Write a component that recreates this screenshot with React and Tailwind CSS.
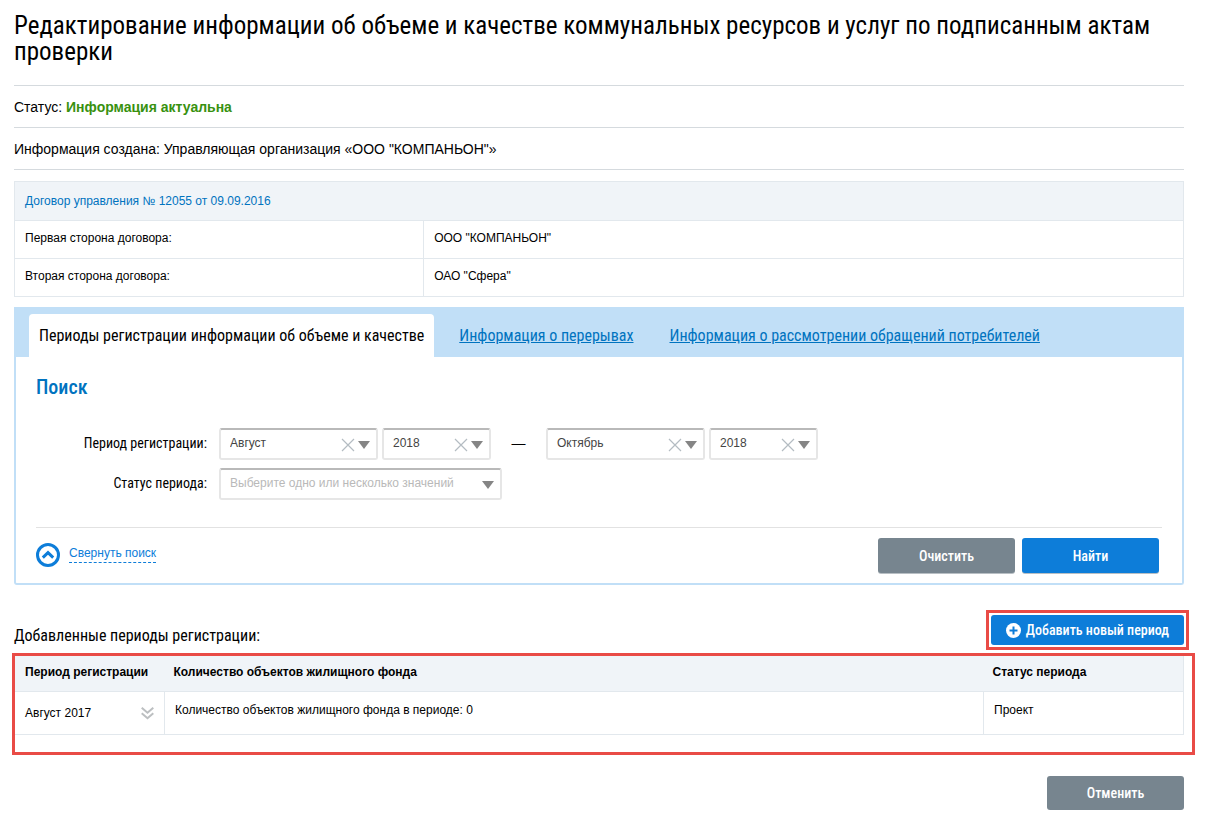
import React, { useState } from 'react';

const MONTHS = ['Январь', 'Февраль', 'Март', 'Апрель', 'Май', 'Июнь', 'Июль', 'Август', 'Сентябрь', 'Октябрь', 'Ноябрь', 'Декабрь'];
const YEARS = ['2016', '2017', '2018', '2019'];

const EMPTY = { monthFrom: '', yearFrom: '', monthTo: '', yearTo: '', status: '' };

const CONTRACT = [
  { label: 'Первая сторона договора:', value: 'ООО "КОМПАНЬОН"' },
  { label: 'Вторая сторона договора:', value: 'ОАО "Сфера"' },
];

const PERIODS = [{ id: 1, name: 'Август 2017', count: 0, status: 'Проект' }];

const Select = ({ id, label, value, options, placeholder = '', clearable, className, onChange }) => (
  <div className={`relative ${className}`}>
    <select
      id={id}
      aria-label={label}
      value={value}
      onChange={(e) => onChange(e.target.value)}
      className={`block h-8 w-full appearance-none rounded-[3px] border-2 border-[#e6e6e6] border-t-[#b9b9b9] bg-white pr-9 pb-[2px] pl-[9px] text-xs ${value ? 'text-[#444]' : 'text-[#b9b9b9]'}`}
    >
      <option value="">{placeholder}</option>
      {options.map((o) => (
        <option key={o} value={o}>{o}</option>
      ))}
    </select>
    {clearable && value && (
      <button type="button" aria-label="Очистить поле" onClick={() => onChange('')} className="absolute top-[10px] right-[23px]">
        <svg width="14" height="14" viewBox="0 0 14 14" className="block" stroke="#b4bcc2" strokeWidth="1.2" fill="none">
          <path d="M1 1l12 12M13 1L1 13" />
        </svg>
      </button>
    )}
    <svg width="12" height="8" viewBox="0 0 12 8" className="pointer-events-none absolute top-[13px] right-2" fill="#858585">
      <path d="M0 0h12L6 8z" />
    </svg>
  </div>
);

const App = () => {
  const [filter, setFilter] = useState({ ...EMPTY, monthFrom: 'Август', yearFrom: '2018', monthTo: 'Октябрь', yearTo: '2018' });
  const [open, setOpen] = useState(true);

  const set = (key) => (value) => setFilter({ ...filter, [key]: value });

  return (
    <main className="bg-white pt-[13px] pr-[22px] pb-2 pl-[14px] font-['Liberation_Sans',Arial,sans-serif] text-xs text-black">
      <h1 className="mb-[20px] font-['Roboto_Condensed','Liberation_Sans_Narrow',sans-serif] text-[25px] leading-[26px]">
        Редактирование информации об объеме и качестве коммунальных ресурсов и услуг по подписанным актам проверки
      </h1>

      {/* Статус */}
      <div className="mb-[11px] border-b border-[#d5dade] text-sm">
        <p className="border-t border-[#d5dade] pt-[11px] pb-[10px] leading-5">
          Статус: <b className="text-[#38910f]">Информация актуальна</b>
        </p>
        <p className="border-t border-[#d5dade] pt-[11px] pb-[10px] leading-5">
          Информация создана: Управляющая организация «ООО "КОМПАНЬОН"»
        </p>
      </div>

      {/* Договор */}
      <table className="mb-[10px] w-full table-fixed border-collapse border border-[#e2e8ed]">
        <colgroup>
          <col className="w-[35%]" />
          <col />
        </colgroup>
        <thead>
          <tr className="h-[39px] bg-[#f0f4f8]">
            <th colSpan="2" className="px-[10px] text-left font-normal">
              <a href="#contract" className="text-[#0073bf]">Договор управления № 12055 от 09.09.2016</a>
            </th>
          </tr>
        </thead>
        <tbody>
          {CONTRACT.map((row) => (
            <tr key={row.label} className="h-[38px] border-t border-[#e2e8ed]">
              <td className="border-r border-[#e2e8ed] px-[10px] pb-[3px]">{row.label}</td>
              <td className="px-[10px] pb-[3px]">{row.value}</td>
            </tr>
          ))}
        </tbody>
      </table>

      {/* Вкладки и поиск */}
      <section className="rounded-b-[3px] border-2 border-t-0 border-[#c1dff7]">
        <nav className="flex h-[50px] items-end bg-[#c1dff7] pl-[13px] font-['Roboto_Condensed','Liberation_Sans_Narrow',sans-serif] text-base">
          <button type="button" className="h-[43px] rounded-t bg-white px-[10px]">Периоды регистрации информации об объеме и качестве</button>
          <a href="#breaks" className="flex h-[43px] items-center pr-[18px] pl-[25px] text-[#0073bf] underline">Информация о перерывах</a>
          <a href="#appeals" className="flex h-[43px] items-center px-[18px] text-[#0073bf] underline">Информация о рассмотрении обращений потребителей</a>
        </nav>

        <div className="px-5 pt-[18px] pb-[10px]">
          <h2 className="font-['Roboto_Condensed','Liberation_Sans_Narrow',sans-serif] text-xl leading-6 font-medium text-[#0073bf]">Поиск</h2>
          {open && (
            <div className="mt-[29px] grid grid-cols-[171px_1fr] items-center gap-x-3 gap-y-2">
              <label htmlFor="monthFrom" className="pb-[2px] text-right font-['Roboto_Condensed','Liberation_Sans_Narrow',sans-serif] text-sm">Период регистрации:</label>
              <div className="flex items-center gap-1">
                <Select id="monthFrom" value={filter.monthFrom} options={MONTHS} clearable className="w-[159px]" onChange={set('monthFrom')} />
                <Select id="yearFrom" label="Год с" value={filter.yearFrom} options={YEARS} clearable className="w-[109px]" onChange={set('yearFrom')} />
                <span className="w-[47px] pb-[2px] text-center text-sm">—</span>
                <Select id="monthTo" label="Месяц по" value={filter.monthTo} options={MONTHS} clearable className="w-[159px]" onChange={set('monthTo')} />
                <Select id="yearTo" label="Год по" value={filter.yearTo} options={YEARS} clearable className="w-[109px]" onChange={set('yearTo')} />
              </div>
              <label htmlFor="status" className="pb-[2px] text-right font-['Roboto_Condensed','Liberation_Sans_Narrow',sans-serif] text-sm">Статус периода:</label>
              <Select id="status" value={filter.status} options={['Проект', 'Размещен']} placeholder="Выберите одно или несколько значений" className="w-[283px]" onChange={set('status')} />
            </div>
          )}

          <div className="mt-[27px] flex items-center justify-between border-t border-[#e2e2e2] pt-[10px] pr-[3px]">
            <button type="button" onClick={() => setOpen(!open)} className="flex items-center gap-[9px] pb-[2px] text-[#0d7dd9]">
              <svg width="24" height="24" viewBox="0 0 24 24" fill="none" stroke="currentColor" strokeWidth="3">
                <circle cx="12" cy="12" r="10.5" />
                <path d="M6.8 14.6L12 9.6l5.2 5" />
              </svg>
              <span className="mb-[2px] border-b border-dashed border-[#0d7dd9] leading-[18px]">{open ? 'Свернуть поиск' : 'Развернуть поиск'}</span>
            </button>
            <div className="flex gap-[7px] font-['Roboto_Condensed','Liberation_Sans_Narrow',sans-serif] text-sm font-medium text-white">
              <button type="button" onClick={() => setFilter(EMPTY)} className="h-[35px] w-[137px] rounded-[3px] bg-[#77858f] shadow-[0_1px_0_#b8bfc4]">Очистить</button>
              <button type="button" className="h-[35px] w-[137px] rounded-[3px] bg-[#0d7dd9] shadow-[0_1px_0_#b8bfc4]">Найти</button>
            </div>
          </div>
        </div>
      </section>

      {/* Периоды */}
      <div className="mt-[30px] mb-[10px] flex items-end justify-between font-['Roboto_Condensed','Liberation_Sans_Narrow',sans-serif]">
        <h3 className="text-base leading-[18px]">Добавленные периоды регистрации:</h3>
        <div className="relative">
          <button type="button" className="flex h-[30px] items-center gap-[5px] rounded-[3px] bg-[#0d7dd9] px-[15px] text-sm font-medium text-white">
            <svg width="15" height="15" viewBox="0 0 15 15">
              <circle cx="7.5" cy="7.5" r="7.5" fill="#fff" />
              <path d="M7.5 3.5v8M3.5 7.5h8" stroke="#0d7dd9" strokeWidth="2" />
            </svg>
            Добавить новый период
          </button>
          <div className="pointer-events-none absolute -inset-[5px] border-3 border-[#e94b46]" />
        </div>
      </div>

      <div className="relative">
        <table className="w-full border-collapse border border-[#e2e8ed]">
          <thead>
            <tr className="h-9 bg-[#f0f4f8] text-left">
              <th className="w-[150px] px-[10px] pb-[4px]">Период регистрации</th>
              <th className="px-[9px] pb-[4px]">Количество объектов жилищного фонда</th>
              <th className="w-[200px] px-[9px] pb-[4px]">Статус периода</th>
            </tr>
          </thead>
          <tbody>
            {PERIODS.map((p) => (
              <tr key={p.id} className="h-[43px] border-t border-[#e2e8ed]">
                <td className="border-r border-[#e2e8ed] px-[10px]">
                  <div className="flex items-center justify-between">
                    {p.name}
                    <button type="button" aria-label="Подробнее">
                      <svg width="13" height="13" viewBox="0 0 13 13" className="block" fill="none" stroke="#bcbfc1" strokeWidth="2">
                        <path d="M.7 .8l5.8 5 5.8-5M.7 6.3l5.8 5 5.8-5" />
                      </svg>
                    </button>
                  </div>
                </td>
                <td className="border-r border-[#e2e8ed] px-[10px] pt-[10px] align-top">Количество объектов жилищного фонда в периоде: {p.count}</td>
                <td className="px-[10px] pt-[10px] align-top">{p.status}</td>
              </tr>
            ))}
          </tbody>
        </table>
        <div className="pointer-events-none absolute -top-[2px] -right-[11px] -bottom-[20px] -left-[2px] border-3 border-[#e94b46]" />
      </div>

      <div className="mt-[41px] flex justify-end">
        <button type="button" className="h-[34px] w-[137px] rounded-[3px] bg-[#77858f] font-['Roboto_Condensed','Liberation_Sans_Narrow',sans-serif] text-sm font-medium text-white">Отменить</button>
      </div>
    </main>
  );
};

export default App;
